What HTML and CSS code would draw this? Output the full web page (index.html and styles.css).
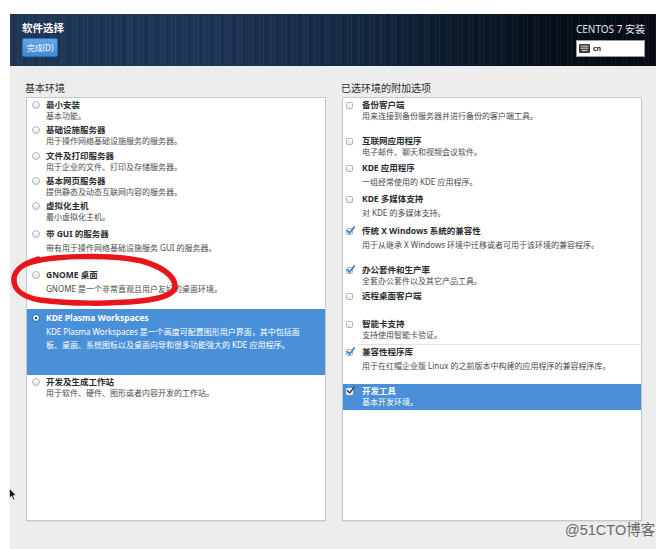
FILE: index.html
```html
<!DOCTYPE html>
<html lang="zh-CN">
<head>
<meta charset="utf-8">
<title>软件选择</title>
<link rel="stylesheet" href="styles.css">
</head>
<body>
<div class="frame">
  <header class="topbar">
    <div class="topbar-left">
      <h1 class="spoke-title">软件选择</h1>
      <button class="done-btn">完成(D)</button>
    </div>
    <div class="topbar-right">
      <div class="product">CENTOS 7 安装</div>
      <div class="kbd-box">
        <svg class="kbd-icon" width="11" height="9" viewBox="0 0 11 9">
          <rect x="0" y="0" width="11" height="9" rx="1" fill="#3a3a3a"/>
          <rect x="1.5" y="1.5" width="8" height="1.2" fill="#bdbdbd"/>
          <rect x="1.5" y="3.6" width="8" height="1.2" fill="#bdbdbd"/>
          <rect x="2.5" y="5.8" width="6" height="1.4" fill="#bdbdbd"/>
        </svg>
        <span class="kbd-layout">cn</span>
      </div>
    </div>
  </header>
  <main class="content">
    <section class="column">
      <h2 class="column-title">基本环境</h2>
      <div class="box">
        <ul class="list list-env">
          <li class="item"><span class="radio"></span><div class="text"><div class="title">最小安装</div><div class="desc">基本功能。</div></div></li>
          <li class="item"><span class="radio"></span><div class="text"><div class="title">基础设施服务器</div><div class="desc">用于操作网络基础设施服务的服务器。</div></div></li>
          <li class="item"><span class="radio"></span><div class="text"><div class="title">文件及打印服务器</div><div class="desc">用于企业的文件、打印及存储服务器。</div></div></li>
          <li class="item"><span class="radio"></span><div class="text"><div class="title">基本网页服务器</div><div class="desc">提供静态及动态互联网内容的服务器。</div></div></li>
          <li class="item"><span class="radio"></span><div class="text"><div class="title">虚拟化主机</div><div class="desc">最小虚拟化主机。</div></div></li>
          <li class="item"><span class="radio"></span><div class="text"><div class="title">带 GUI 的服务器</div><div class="desc desc-gap">带有用于操作网络基础设施服务 GUI 的服务器。</div></div></li>
          <li class="item"><span class="radio"></span><div class="text"><div class="title">GNOME 桌面</div><div class="desc desc-gap">GNOME 是一个非常直观且用户友好的桌面环境。</div></div></li>
          <li class="item selected"><span class="radio radio-on"></span><div class="text"><div class="title">KDE Plasma Workspaces</div><div class="desc desc-gap">KDE Plasma Workspaces 是一个高度可配置图形用户界面，其中包括面<br>板、桌面、系统图标以及桌面向导和很多功能强大的 KDE 应用程序。</div></div></li>
          <li class="item"><span class="radio"></span><div class="text"><div class="title">开发及生成工作站</div><div class="desc">用于软件、硬件、图形或者内容开发的工作站。</div></div></li>
        </ul>
      </div>
    </section>
    <section class="column">
      <h2 class="column-title">已选环境的附加选项</h2>
      <div class="box">
        <ul class="list list-addon">
          <li class="item"><span class="check"></span><div class="text"><div class="title">备份客户端</div><div class="desc">用来连接到备份服务器并进行备份的客户端工具。</div></div></li>
          <li class="item"><span class="check"></span><div class="text"><div class="title">互联网应用程序</div><div class="desc">电子邮件、聊天和视频会议软件。</div></div></li>
          <li class="item"><span class="check"></span><div class="text"><div class="title">KDE 应用程序</div><div class="desc desc-gap">一组经常使用的 KDE 应用程序。</div></div></li>
          <li class="item"><span class="check"></span><div class="text"><div class="title">KDE 多媒体支持</div><div class="desc desc-gap">对 KDE 的多媒体支持。</div></div></li>
          <li class="item"><span class="check checked"><svg viewBox="0 0 10 10"><path d="M1.5 5.2 L4 7.8 L9.2 1.2" fill="none" stroke="#3f86d6" stroke-width="2" stroke-linecap="round" stroke-linejoin="round"/></svg></span><div class="text"><div class="title">传统 X Windows 系统的兼容性</div><div class="desc desc-gap">用于从继承 X Windows 环境中迁移或者可用于该环境的兼容程序。</div></div></li>
          <li class="item"><span class="check checked"><svg viewBox="0 0 10 10"><path d="M1.5 5.2 L4 7.8 L9.2 1.2" fill="none" stroke="#3f86d6" stroke-width="2" stroke-linecap="round" stroke-linejoin="round"/></svg></span><div class="text"><div class="title">办公套件和生产率</div><div class="desc">全套办公套件以及其它产品工具。</div></div></li>
          <li class="item"><span class="check"></span><div class="text"><div class="title">远程桌面客户端</div></div></li>
          <li class="item"><span class="check"></span><div class="text"><div class="title">智能卡支持</div><div class="desc">支持使用智能卡验证。</div></div></li>
          <li class="sep"></li>
          <li class="item"><span class="check checked"><svg viewBox="0 0 10 10"><path d="M1.5 5.2 L4 7.8 L9.2 1.2" fill="none" stroke="#3f86d6" stroke-width="2" stroke-linecap="round" stroke-linejoin="round"/></svg></span><div class="text"><div class="title">兼容性程序库</div><div class="desc desc-gap">用于在红帽企业版 Linux 的之前版本中构建的应用程序的兼容程序库。</div></div></li>
          <li class="item selected"><span class="check checked check-sel"><svg viewBox="0 0 10 10"><path d="M1.5 5.2 L4 7.8 L9.2 1.2" fill="none" stroke="#4a4a4a" stroke-width="1.8" stroke-linecap="round" stroke-linejoin="round"/></svg></span><div class="text"><div class="title">开发工具</div><div class="desc">基本开发环境。</div></div></li>
        </ul>
      </div>
    </section>
  </main>
</div>
<svg class="annotation" width="671" height="549" viewBox="0 0 671 549">
  <path d="M24 265 C45 255 110 254 142 261 C160 266 174 275 175 285 C176 294 161 299 140 301 C110 304 70 304 40 300 C22 297 13 289 14 278 C15 270 22 264 38 259" fill="none" stroke="#e8161c" stroke-width="5.5" stroke-linecap="round" stroke-linejoin="round"/>
</svg>
<svg class="cursor" width="8" height="13" viewBox="0 0 8 13">
  <path d="M0.5 0.5 L0.5 10 L2.6 8 L4.2 11.8 L5.6 11.2 L4.1 7.6 L7 7.4 Z" fill="#111" stroke="#fff" stroke-width="0.6"/>
</svg>
<div class="watermark">@51CTO博客</div>
</body>
</html>
```
FILE: styles.css
```css
html, body {
  margin: 0;
  padding: 0;
}
body {
  position: relative;
  width: 671px;
  height: 549px;
  overflow: hidden;
  background: #ffffff;
  font-family: "Noto Sans", "Noto Sans CJK SC", sans-serif;
}
.frame {
  margin: 14px 0 0 10px;
  width: 646px;
  height: 535px;
  background: #ededed;
}
.topbar {
  height: 52px;
  box-sizing: border-box;
  display: flex;
  justify-content: space-between;
  padding: 0 11px 0 12px;
  background:
    repeating-linear-gradient(90deg, rgba(255,255,255,0.05) 0 1px, transparent 1px 3px, rgba(0,0,0,0.12) 3px 4px, transparent 4px 7px, rgba(255,255,255,0.03) 7px 9px, transparent 9px 11px),
    linear-gradient(90deg, #1e3556 0%, #1d3454 30%, #152a44 50%, #0c1b2d 68%, #050e17 85%, #040b12 100%);
}
.topbar-left {
  padding-top: 8px;
  display: flex;
  flex-direction: column;
  align-items: flex-start;
}
.spoke-title {
  margin: 0;
  font-size: 10.5px;
  line-height: 12px;
  font-weight: bold;
  color: #ffffff;
}
.done-btn {
  margin-top: 4px;
  width: 36px;
  height: 19px;
  padding: 0;
  box-sizing: border-box;
  border: 1px solid #2f6db3;
  border-radius: 2px;
  background: linear-gradient(#62a6ea, #4189d6);
  color: #ffffff;
  font-family: inherit;
  font-size: 8px;
  line-height: 17px;
}
.topbar-right {
  padding-top: 9px;
  display: flex;
  flex-direction: column;
  align-items: flex-end;
}
.product {
  font-size: 10px;
  line-height: 12px;
  color: #e4e4e4;
}
.kbd-box {
  margin-top: 5px;
  width: 69px;
  height: 17px;
  box-sizing: border-box;
  background: #ffffff;
  border: 1px solid #9a9a9a;
  display: flex;
  align-items: center;
  gap: 3px;
  padding-left: 2px;
}
.kbd-icon {
  display: block;
}
.kbd-layout {
  font-size: 7px;
  font-weight: bold;
  color: #222222;
}
.content {
  display: grid;
  grid-template-columns: 300px 300px;
  column-gap: 16px;
  padding: 15.5px 14px 0 16px;
}
.column-title {
  margin: 0 0 3.5px -1px;
  font-size: 10px;
  line-height: 12px;
  font-weight: normal;
  color: #2e2e2e;
}
.box {
  height: 424px;
  box-sizing: border-box;
  background: #ffffff;
  border: 1px solid #c8c8c8;
  box-shadow: 0 1px 1px rgba(0,0,0,0.06);
}
.list {
  list-style: none;
  margin: 0;
  padding: 0;
  display: grid;
}
.list-env {
  grid-template-rows: 25px 26px 25px 25px 28px 41px 41px 66px auto;
}
.list-addon {
  grid-template-rows: 36px 27px 31px 32px 39px 26px 28px 27px 1px 39px 26px;
}
.item {
  display: grid;
  grid-template-columns: 19px 1fr;
  align-items: start;
  padding-top: 2px;
  box-sizing: border-box;
  min-height: 0;
}
.item.selected {
  background: #4a90d9;
}
.list-env .item.selected {
  padding-top: 4px;
}
.title {
  font-size: 8.5px;
  line-height: 10px;
  font-weight: bold;
  color: #2a2f31;
  white-space: nowrap;
}
.desc {
  font-size: 8px;
  line-height: 11px;
  color: #4a4a4a;
  white-space: nowrap;
}
.desc-gap {
  margin-top: 2px;
  line-height: 13px;
}
.selected .title,
.selected .desc {
  color: #ffffff;
}
.radio {
  display: block;
  width: 8px;
  height: 8px;
  box-sizing: border-box;
  margin: 1px 0 0 4.5px;
  border: 1px solid #b3b3b3;
  border-radius: 50%;
  background: linear-gradient(#ffffff, #e4e4e4);
}
.radio-on {
  border-color: #2d6cb0;
  background: radial-gradient(circle, #3a3a3a 0 1.3px, transparent 1.6px), linear-gradient(#ffffff, #dcdcdc);
}
.check {
  display: block;
  position: relative;
  width: 7px;
  height: 7px;
  box-sizing: border-box;
  margin: 1.5px 0 0 2.5px;
  border: 1px solid #b3b3b3;
  border-radius: 1.5px;
  background: linear-gradient(#ffffff, #e6e6e6);
}
.check svg {
  position: absolute;
  left: -1px;
  top: -2.5px;
  width: 9px;
  height: 9px;
}
.check-sel {
  border-color: #ffffff;
  background: #ffffff;
}
.sep {
  background: #e2e2e2;
  margin-left: 15px;
}
.annotation {
  position: absolute;
  left: 0;
  top: 0;
  pointer-events: none;
}
.cursor {
  position: absolute;
  left: 9px;
  top: 488px;
}
.watermark {
  position: absolute;
  left: 565px;
  top: 521px;
  font-family: "Liberation Sans", "Noto Sans CJK SC", sans-serif;
  font-size: 14.5px;
  line-height: 18px;
  color: #6a6a6a;
  white-space: nowrap;
}
```
